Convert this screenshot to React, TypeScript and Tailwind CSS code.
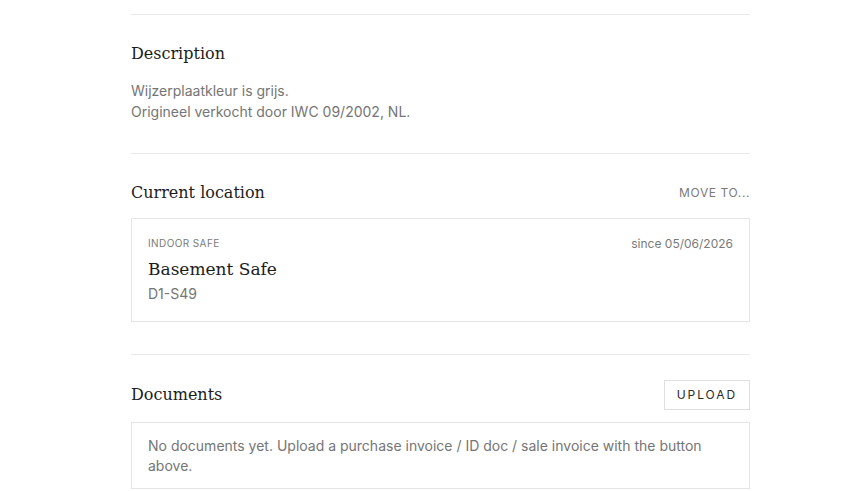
const serif = "font-['DejaVu_Serif','Georgia',serif]";

function SectionHeader({ title, action }: { title: string; action?: React.ReactNode }) {
  return (
    <div className="flex items-center justify-between">
      <h2 className={`${serif} text-[16px] leading-7 text-[#1c1c1c]`}>{title}</h2>
      {action}
    </div>
  );
}

export default function App() {
  return (
    <div className="min-h-screen bg-white font-['Inter',sans-serif]">
      <div className="ml-[131px] w-[619px] pt-[14px]">
        <section className="border-t border-[#e8e8e8] pt-[25px] pb-[31px]">
          <SectionHeader title="Description" />
          <div className="mt-[12px] text-[14px] leading-[21px] text-[#757575]">
            <p>Wijzerplaatkleur is grijs.</p>
            <p>Origineel verkocht door IWC 09/2002, NL.</p>
          </div>
        </section>

        <section className="border-t border-[#e8e8e8] pt-[25px] pb-[32px]">
          <SectionHeader
            title="Current location"
            action={
              <button className="text-[12px] tracking-[0.05em] text-[#7a7a7a]">MOVE TO...</button>
            }
          />
          <div className="mt-[11px] border border-[#e5e5e5] px-4 pt-[17px] pb-[17px]">
            <div className="flex items-start justify-between">
              <div>
                <div className="text-[10px] leading-[14px] tracking-[0.04em] text-[#7a7a7a]">INDOOR SAFE</div>
                <div className={`${serif} mt-[5px] text-[17px] leading-7 text-[#1c1c1c]`}>Basement Safe</div>
                <div className="mt-[1px] text-[14px] leading-5 text-[#757575]">D1-S49</div>
              </div>
              <div className="text-[12px] leading-4 text-[#7a7a7a]">since 05/06/2026</div>
            </div>
          </div>
        </section>

        <section className="border-t border-[#e8e8e8] pt-[25px] pb-[16px]">
          <SectionHeader
            title="Documents"
            action={
              <button className="h-[30px] border border-[#e0e0e0] px-[12px] text-[12px] tracking-[0.16em] text-[#2a2a2a]">
                UPLOAD
              </button>
            }
          />
          <div className="mt-[12px] border border-[#e5e5e5] px-4 pt-[13px] pb-[12px] text-[14px] leading-5 text-[#757575]">
            No documents yet. Upload a purchase invoice / ID doc / sale invoice with the button above.
          </div>
        </section>
      </div>
    </div>
  );
}
